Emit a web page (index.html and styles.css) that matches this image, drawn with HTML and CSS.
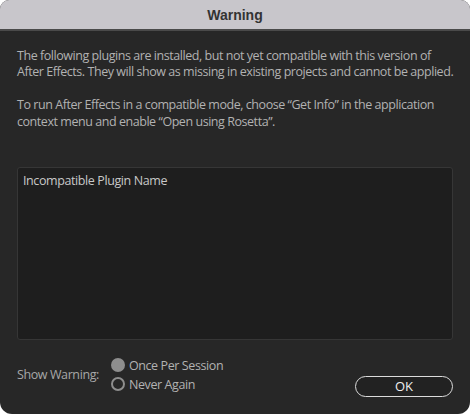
FILE: index.html
```html
<!DOCTYPE html>
<html>
<head>
  <meta charset="utf-8">
  <link rel="stylesheet" href="styles.css">
  <title>Warning</title>
</head>
<body>
  <div class="dialog">
    <div class="titlebar">Warning</div>
    <div class="content">
      <p class="message">The following plugins are installed, but not yet compatible with this version of<br>After Effects. They will show as missing in existing projects and cannot be applied.</p>
      <p class="message">To run After Effects in a compatible mode, choose “Get Info” in the application<br>context menu and enable “Open using Rosetta”.</p>
      <div class="plugin-list">
        <div class="plugin-item">Incompatible Plugin Name</div>
      </div>
      <div class="footer">
        <div class="show-warning">
          <span class="label">Show Warning:</span>
          <div class="radios">
            <div class="radio-row"><span class="radio checked"></span>Once Per Session</div>
            <div class="radio-row"><span class="radio"></span>Never Again</div>
          </div>
        </div>
        <button class="ok-button">OK</button>
      </div>
    </div>
  </div>
</body>
</html>
```

FILE: styles.css
```css
html, body {
  margin: 0;
  padding: 0;
  background-color: #ffffff;
}
body {
  font-family: "Open Sans", "Noto Sans", sans-serif;
}
.dialog {
  width: 470px;
  height: 414px;
  background-color: #272727;
  border-radius: 9px 9px 12px 12px;
  overflow: hidden;
  display: flex;
  flex-direction: column;
}
.titlebar {
  height: 29px;
  line-height: 30px;
  background-color: #c8c6cb;
  border-bottom: 2px solid #4a4a4a;
  color: #333333;
  font-weight: bold;
  font-size: 14px;
  text-align: center;
  font-family: "Liberation Sans", sans-serif;
}
.content {
  flex: 1;
  padding: 16.5px 15px 0 17px;
  display: flex;
  flex-direction: column;
}
.message {
  margin: 0 0 16.5px 0;
  color: #b2b2b2;
  font-size: 12.5px;
  line-height: 16.5px;
  letter-spacing: -0.45px;
  white-space: nowrap;
}
.plugin-list {
  margin-top: 20px;
  margin-right: 2px;
  height: 163px;
  background-color: #1e1e1e;
  border: 1px solid #363636;
  border-radius: 3px;
  padding: 4px 5px;
}
.plugin-item {
  color: #c8c8c8;
  font-size: 12.5px;
  line-height: 18px;
  letter-spacing: -0.4px;
}
.footer {
  margin-top: 17px;
  margin-right: 2px;
  display: flex;
  justify-content: space-between;
  align-items: flex-start;
}
.show-warning {
  display: flex;
  align-items: center;
  color: #a8a8a8;
  font-size: 12.5px;
  letter-spacing: -0.4px;
}
.label {
  margin-right: 12px;
}
.radios {
  display: flex;
  flex-direction: column;
  gap: 2px;
  color: #b2b2b2;
}
.radio-row {
  display: flex;
  align-items: center;
  height: 17px;
}
.radio {
  width: 10px;
  height: 10px;
  border: 2px solid #8e8e8e;
  border-radius: 50%;
  margin-right: 4px;
}
.radio.checked {
  width: 14px;
  height: 14px;
  border: none;
  background-color: #8e8e8e;
}
.ok-button {
  margin-top: 19px;
  width: 98px;
  height: 21px;
  background-color: #222222;
  border: 1.5px solid #dcdcdc;
  border-radius: 11px;
  color: #f0f0f0;
  font-family: "Open Sans", sans-serif;
  font-size: 13px;
  padding: 0;
}
```
